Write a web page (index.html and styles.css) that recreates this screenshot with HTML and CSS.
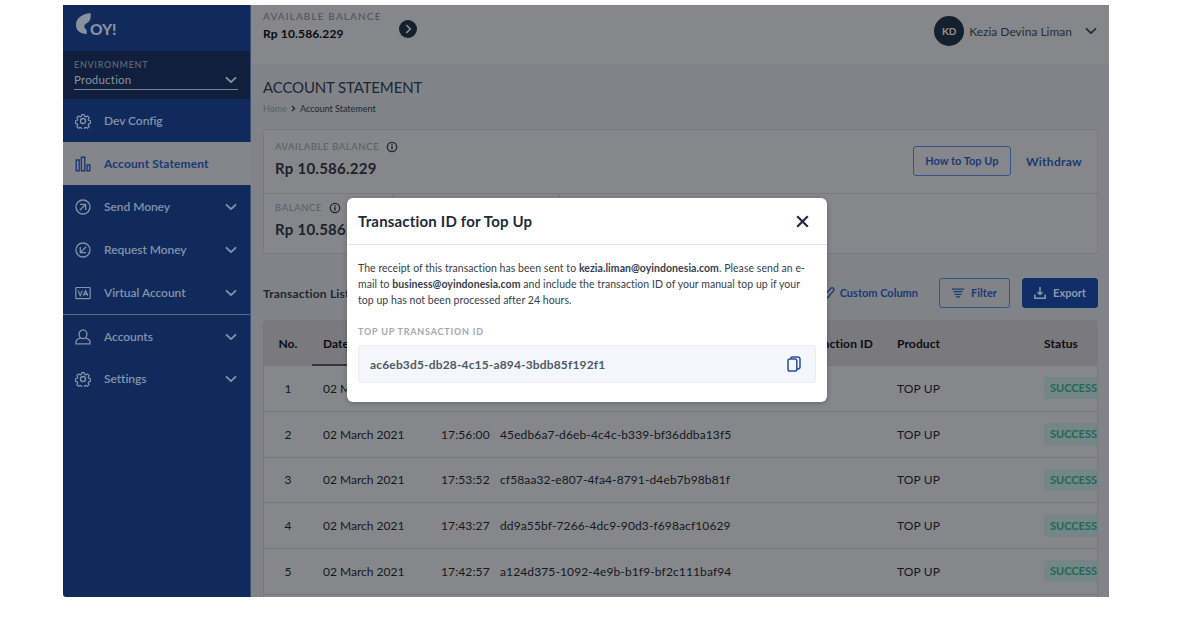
FILE: index.html
```html
<!DOCTYPE html>
<html lang="en">
<head>
<meta charset="utf-8">
<title>Account Statement</title>
<link rel="stylesheet" href="styles.css">
</head>
<body>
<svg class="defs" width="0" height="0">
  <symbol id="chev" viewBox="0 0 12 8"><path d="M1.500 1.800 6 6.200l4.500-4.400" fill="none" stroke="currentColor" stroke-width="1.800" stroke-linecap="round" stroke-linejoin="round"/></symbol>
  <symbol id="gear" viewBox="0 0 24 24"><g fill="none" stroke="currentColor" stroke-width="2" stroke-linejoin="round"><circle cx="12" cy="12" r="3.800"/><path d="M10 1.500h4l.7 3 2 .8 2.600-1.600 2.900 2.900-1.700 2.700.8 1.900 3 .8v4l-3 .7-.8 2 1.600 2.600-2.900 2.900-2.600-1.700-2 .8-.7 3h-4l-.7-3-2-.8-2.600 1.700-2.900-2.900 1.600-2.600-.8-2-3-.7v-4l3-.8.8-1.900-1.600-2.700 2.900-2.900 2.600 1.600 2-.8z" transform="translate(1.100 1) scale(.91)"/></g></symbol>
  <symbol id="info" viewBox="0 0 12 12"><circle cx="6" cy="6" r="4.700" fill="none" stroke="currentColor" stroke-width="1.300"/><path d="M6 5.300v3.200M6 3.200v1.200" stroke="currentColor" stroke-width="1.500"/></symbol>
</svg>
<div class="app">
  <aside class="sidebar">
    <div class="logo">
      <svg width="16" height="23" viewBox="0 0 16 23"><path d="M14.600 1C15 4.500 14.800 8 12.500 10c-2 1.700-4 2.400-4.300 4 0 1.600 1 2.700 2.300 3.800l.3 4.200C4 22 0 18.500 0 13 0 6 6 2 14.600 1z" fill="currentColor"/></svg>
      <span>OY!</span>
    </div>
    <div class="env">
      <div class="env-label">ENVIRONMENT</div>
      <div class="env-value"><span>Production</span><svg class="chev"><use href="#chev"/></svg></div>
    </div>
    <nav>
      <a class="item"><svg class="ico"><use href="#gear"/></svg><span>Dev Config</span></a>
      <a class="item active"><svg class="ico" viewBox="0 0 16 16"><path d="M1.200 4h3v10.800h-3zM6.400 1.200h3.400v13.600H6.400zM12 9h2.800v5.800H12z" fill="none" stroke="currentColor" stroke-width="1.400"/></svg><span>Account Statement</span></a>
      <a class="item"><svg class="ico" viewBox="0 0 16 16"><g fill="none" stroke="currentColor" stroke-width="1.300"><circle cx="8" cy="8" r="7"/><path d="M5 5.300h5.600V11M10.400 5.500 4.800 11.200"/></g></svg><span>Send Money</span><svg class="chev"><use href="#chev"/></svg></a>
      <a class="item"><svg class="ico" viewBox="0 0 16 16"><g fill="none" stroke="currentColor" stroke-width="1.300"><circle cx="8" cy="8" r="7"/><path d="M5.300 5v5.600H11M5.500 10.400 11.200 4.800"/></g></svg><span>Request Money</span><svg class="chev"><use href="#chev"/></svg></a>
      <a class="item"><svg class="ico" viewBox="0 0 16 16"><g fill="none" stroke="currentColor" stroke-width="1.200"><rect x=".8" y="2.500" width="14.400" height="11.200" rx=".8"/><path d="m3 5.500 2.200 5 2.200-5M8.300 10.800l2.300-5 2.300 5M9.200 9.300h2.900"/></g></svg><span>Virtual Account</span><svg class="chev"><use href="#chev"/></svg></a>
      <a class="item split"><svg class="ico" viewBox="0 0 16 16"><g fill="none" stroke="currentColor" stroke-width="1.300"><ellipse cx="8" cy="5.200" rx="3.900" ry="4.400"/><path d="M5.600 8.800C2.500 9.800 1 10.800 1 13v1.800h14V13c0-2.200-1.500-3.200-4.600-4.200"/></g></svg><span>Accounts</span><svg class="chev"><use href="#chev"/></svg></a>
      <a class="item"><svg class="ico"><use href="#gear"/></svg><span>Settings</span><svg class="chev"><use href="#chev"/></svg></a>
    </nav>
  </aside>
  <main class="main">
    <header class="topbar">
      <div class="top-balance"><div class="top-label">AVAILABLE BALANCE</div><div class="top-amount">Rp 10.586.229</div></div>
      <svg class="go" viewBox="0 0 18 18"><circle cx="9" cy="9" r="9" fill="#15202d"/><path d="m7.300 5 4 4-4 4" fill="none" stroke="#8b8d91" stroke-width="1.700"/></svg>
      <div class="user"><span class="avatar">KD</span><span class="name">Kezia Devina Liman</span><svg class="chev"><use href="#chev"/></svg></div>
    </header>
    <section class="content">
      <h1>ACCOUNT STATEMENT</h1>
      <div class="crumbs"><span class="home">Home</span><svg width="5" height="7" viewBox="0 0 5 7"><path d="m1 1 2.500 2.500L1 6" fill="none" stroke="currentColor" stroke-width="1.300"/></svg><span class="here">Account Statement</span></div>
      <div class="card">
        <div class="card-row first">
          <div class="figure"><div class="label"><span>AVAILABLE BALANCE</span><svg class="info"><use href="#info"/></svg></div><div class="amount">Rp 10.586.229</div></div>
          <div class="actions"><button class="btn howto">How to Top Up</button><a class="withdraw">Withdraw</a></div>
        </div>
        <div class="card-row second">
          <div class="figure cell-a"><div class="label"><span>BALANCE</span><svg class="info"><use href="#info"/></svg></div><div class="amount">Rp 10.586.229</div></div>
          <div class="cell-b"></div>
        </div>
      </div>
      <div class="toolbar">
        <h2>Transaction List</h2>
        <a class="custom"><svg width="12" height="14" viewBox="0 0 12 14"><path d="M1.500 9.500 7.800 2.200a1.900 1.900 0 0 1 2.800 2.500L4.500 11.800l-3 1z" fill="none" stroke="currentColor" stroke-width="1.400"/></svg><span>Custom Column</span></a>
        <button class="btn filter"><svg width="12" height="10" viewBox="0 0 12 10"><path d="M0 1.100h12M1.500 3.700h9M2.700 6.300h6.600M4 8.900h4" stroke="currentColor" stroke-width="1.300"/></svg><span>Filter</span></button>
        <button class="btn export"><svg width="12" height="12" viewBox="0 0 12 12"><path d="M6 0v7M3.500 5 6 7.500 8.500 5M.8 7.500v3.700h10.400V7.500" fill="none" stroke="currentColor" stroke-width="1.500"/></svg><span>Export</span></button>
      </div>
      <div class="table">
        <div class="tr head"><span class="no">No.</span><span class="date sorted">Date</span><span></span><span></span><span class="txid">Transaction ID</span><span>Product</span><span>Status</span></div>
        <div class="tr"><span class="no">1</span><span class="date">02 March 2021</span><span>17:58:02</span><span class="hash">ac6eb3d5-db28-4c15-a894-3bdb85f192f1</span><span></span><span class="prod">TOP UP</span><span class="badge">SUCCESS</span></div>
        <div class="tr"><span class="no">2</span><span class="date">02 March 2021</span><span>17:56:00</span><span class="hash">45edb6a7-d6eb-4c4c-b339-bf36ddba13f5</span><span></span><span class="prod">TOP UP</span><span class="badge">SUCCESS</span></div>
        <div class="tr"><span class="no">3</span><span class="date">02 March 2021</span><span>17:53:52</span><span class="hash">cf58aa32-e807-4fa4-8791-d4eb7b98b81f</span><span></span><span class="prod">TOP UP</span><span class="badge">SUCCESS</span></div>
        <div class="tr"><span class="no">4</span><span class="date">02 March 2021</span><span>17:43:27</span><span class="hash">dd9a55bf-7266-4dc9-90d3-f698acf10629</span><span></span><span class="prod">TOP UP</span><span class="badge">SUCCESS</span></div>
        <div class="tr"><span class="no">5</span><span class="date">02 March 2021</span><span>17:42:57</span><span class="hash">a124d375-1092-4e9b-b1f9-bf2c111baf94</span><span></span><span class="prod">TOP UP</span><span class="badge">SUCCESS</span></div>
        <div class="tr"></div>
      </div>
    </section>
  </main>
  <div class="modal">
    <div class="modal-head"><h3>Transaction ID for Top Up</h3><svg width="13" height="13" viewBox="0 0 13 13"><path d="m1.200 1.200 10.600 10.600M11.800 1.200 1.200 11.800" stroke="currentColor" stroke-width="2.200"/></svg></div>
    <div class="modal-body">
      <p>The receipt of this transaction has been sent to <b>kezia.liman@oyindonesia.com</b>. Please send an e-<br>mail to <b>business@oyindonesia.com</b> and include the transaction ID of your manual top up if your<br>top up has not been processed after 24 hours.</p>
      <div class="id-label">TOP UP TRANSACTION ID</div>
      <div class="id-box"><span>ac6eb3d5-db28-4c15-a894-3bdb85f192f1</span><svg width="14" height="16" viewBox="0 0 14 16"><g fill="none" stroke="currentColor" stroke-width="1.500"><rect x="1" y="3" width="8.800" height="12" rx="1.800"/><path d="M3.600 2.800Q3.800 1 5.600 1h5.200Q13 1 13 3.200V11q0 1.900-2.900 2.300"/></g></svg></div>
    </div>
  </div>
</div>
</body>
</html>
```
FILE: styles.css
```css
* { box-sizing: border-box; }
body { margin: 0; padding: 5px 0 0 63px; background: #fff; font-family: Lato, "Open Sans", sans-serif; white-space: nowrap; }
h1, h2, h3, p { margin: 0; }
svg { display: block; flex: none; }
.defs { position: absolute; }
.app { position: relative; display: flex; width: 1046px; height: 592px; overflow: hidden; border-bottom-left-radius: 3px; }
.chev { width: 12px; height: 8px; }

.sidebar { flex: none; width: 188px; background: #102a5c; color: #8493aa; border-right: 1px solid #3a5079; }
.logo { display: flex; height: 46px; padding: 7px 0 0 13px; color: #8a919e; }
.logo span { font-size: 15.500px; font-weight: 900; line-height: 20px; margin: 7px 0 0 -2px; }
.env { height: 48px; padding: 8px 12px 0 11px; background: #101f3d; }
.env-label { font-size: 9px; line-height: 11px; letter-spacing: .7px; font-weight: 600; color: #5c6575; }
.env-value { display: flex; align-items: center; justify-content: space-between; height: 20px; padding-right: 1px; border-bottom: 1px solid #7b8391; font-size: 11.500px; color: #8b929e; letter-spacing: .2px; }
.item { display: flex; align-items: center; height: 43.100px; padding: 0 13px 0 12px; font-size: 12px; font-weight: 600; letter-spacing: -.05px; }
.item span { margin: -1px 0 0 13px; flex: 1; }
.item.active { background: #84868b; color: #1a3a74; font-weight: 700; letter-spacing: .13px; margin-right: -1px; }
.item.split { border-top: 1px solid #5d6d8c; }
.ico { width: 16px; height: 16px; }

.main { flex: 1; min-width: 0; background: #808489; color: #1e2630; }
.topbar { display: flex; height: 59px; padding: 0 12px; background: #86878b; }
.top-balance { width: 136px; padding-top: 4px; }
.top-label { font-size: 10px; line-height: 14px; letter-spacing: 1.150px; color: #4c5057; }
.top-amount { margin-top: 1px; font-size: 12px; line-height: 20px; font-weight: 700; letter-spacing: .15px; color: #0a0c10; }
.go { width: 18px; height: 18px; margin-top: 15px; }
.user { display: flex; align-items: center; height: 52px; margin-left: auto; font-size: 12px; color: #252d38; }
.avatar { width: 30px; height: 30px; margin-right: 5px; border-radius: 50%; background: #15202d; color: #92959a; font-size: 10px; font-weight: 700; line-height: 30px; text-align: center; }
.user .chev { margin-left: 13px; }

.content { padding: 13px 11px 0 12px; }
h1 { font-size: 15px; line-height: 20px; font-weight: 400; letter-spacing: -.15px; }
.crumbs { display: flex; align-items: center; height: 12px; margin-top: 5px; font-size: 9px; }
.crumbs svg { margin: 0 4px; }
.home { color: #595e65; }
.card { height: 125px; margin-top: 15px; border: 1px solid #777a7e; border-radius: 3px; background: #86878b; }
.card-row { display: flex; justify-content: space-between; }
.first { height: 64px; border-bottom: 1px solid #777a7e; }
.figure { padding: 10px 0 0 11px; }
.label { display: flex; align-items: center; height: 13px; font-size: 9.500px; letter-spacing: .6px; color: #595c62; }
.info { width: 12px; height: 12px; margin: 1px 0 0 7px; color: #20262f; }
.amount { margin-top: 5px; font-size: 15px; line-height: 20px; font-weight: 700; letter-spacing: .25px; color: #1e2229; }
.second { height: 59px; justify-content: flex-start; }
.second .figure { padding-top: 7px; }
.cell-a { width: 130px; border-right: 1px solid #777a7e; }
.cell-b { width: 166px; border-right: 1px solid #777a7e; }
.actions { display: flex; align-items: center; height: 62px; padding-right: 15px; color: #1a3a74; }
.btn { display: flex; align-items: center; justify-content: center; height: 30px; padding: 0; border: 1px solid #34538c; border-radius: 3px; background: none; color: #1a3a74; font: 700 11px/14px Lato, sans-serif; }
.howto { width: 98px; margin-right: 15px; padding-bottom: 1px; }
.withdraw { font-size: 12px; font-weight: 700; letter-spacing: .3px; }
.toolbar { display: flex; align-items: center; height: 30px; margin-top: 24px; }
h2 { font-size: 12px; font-weight: 700; letter-spacing: .2px; margin-right: auto; }
.custom { display: flex; align-items: center; margin-right: 21px; color: #1a3a74; font-size: 11px; font-weight: 700; }
.custom span { margin: -1px 0 0 5px; }
.filter { width: 71px; margin-right: 12px; }
.filter span, .export span { margin: -1px 0 0 7px; }
.export { width: 76px; background: #102f68; border-color: #102f68; color: #8c98ae; }

.table { margin-top: 12px; height: 280px; border: 1px solid #76797d; border-radius: 3px 3px 0 0; background: #86878b; overflow: hidden; font-size: 12px; letter-spacing: .12px; color: #15181d; }
.tr { display: grid; grid-template-columns: 48px 129px 59px 297px 100px 147px 60px; align-items: center; height: 45.750px; border-bottom: 1px solid #75787c; }
.head { height: 45px; background: #7a7a7e; border-bottom: 0; font-weight: 700; color: #0b0d11; }
.no { text-align: center; }
.date { padding-left: 11px; letter-spacing: 0; }
.sorted { height: 44px; line-height: 44px; border-bottom: 2px solid #33373e; }
.txid { width: 76px; direction: rtl; }
.badge { height: 22px; padding-left: 6px; border-radius: 3px; background: #748685; color: #1f665b; font-size: 11px; line-height: 22px; font-weight: 700; letter-spacing: 0; }

.modal { position: absolute; left: 284px; top: 193px; width: 480px; height: 204px; border-radius: 6px; background: #fff; box-shadow: 0 1px 5px rgba(0,0,0,.25); color: #36404c; }
.modal-head { display: flex; align-items: center; justify-content: space-between; height: 47px; padding: 0 18px 0 11px; border-bottom: 1px solid #e5e6e8; color: #202c39; }
h3 { font-size: 15px; font-weight: 700; letter-spacing: .18px; }
.modal-body { padding: 16px 11px 0; }
p { font-size: 10.500px; line-height: 15.800px; letter-spacing: .045px; }
.id-label { margin-top: 18px; font-size: 9px; line-height: 12px; font-weight: 700; letter-spacing: .8px; color: #a4a9b0; }
.id-box { display: flex; align-items: center; justify-content: space-between; height: 38px; margin-top: 7px; padding: 0 14px 0 11px; border: 1px solid #e9ecf1; border-radius: 3px; background: #f3f6fb; font-size: 12px; font-weight: 700; letter-spacing: .16px; color: #515963; }
.id-box svg { color: #254f9c; }
```
